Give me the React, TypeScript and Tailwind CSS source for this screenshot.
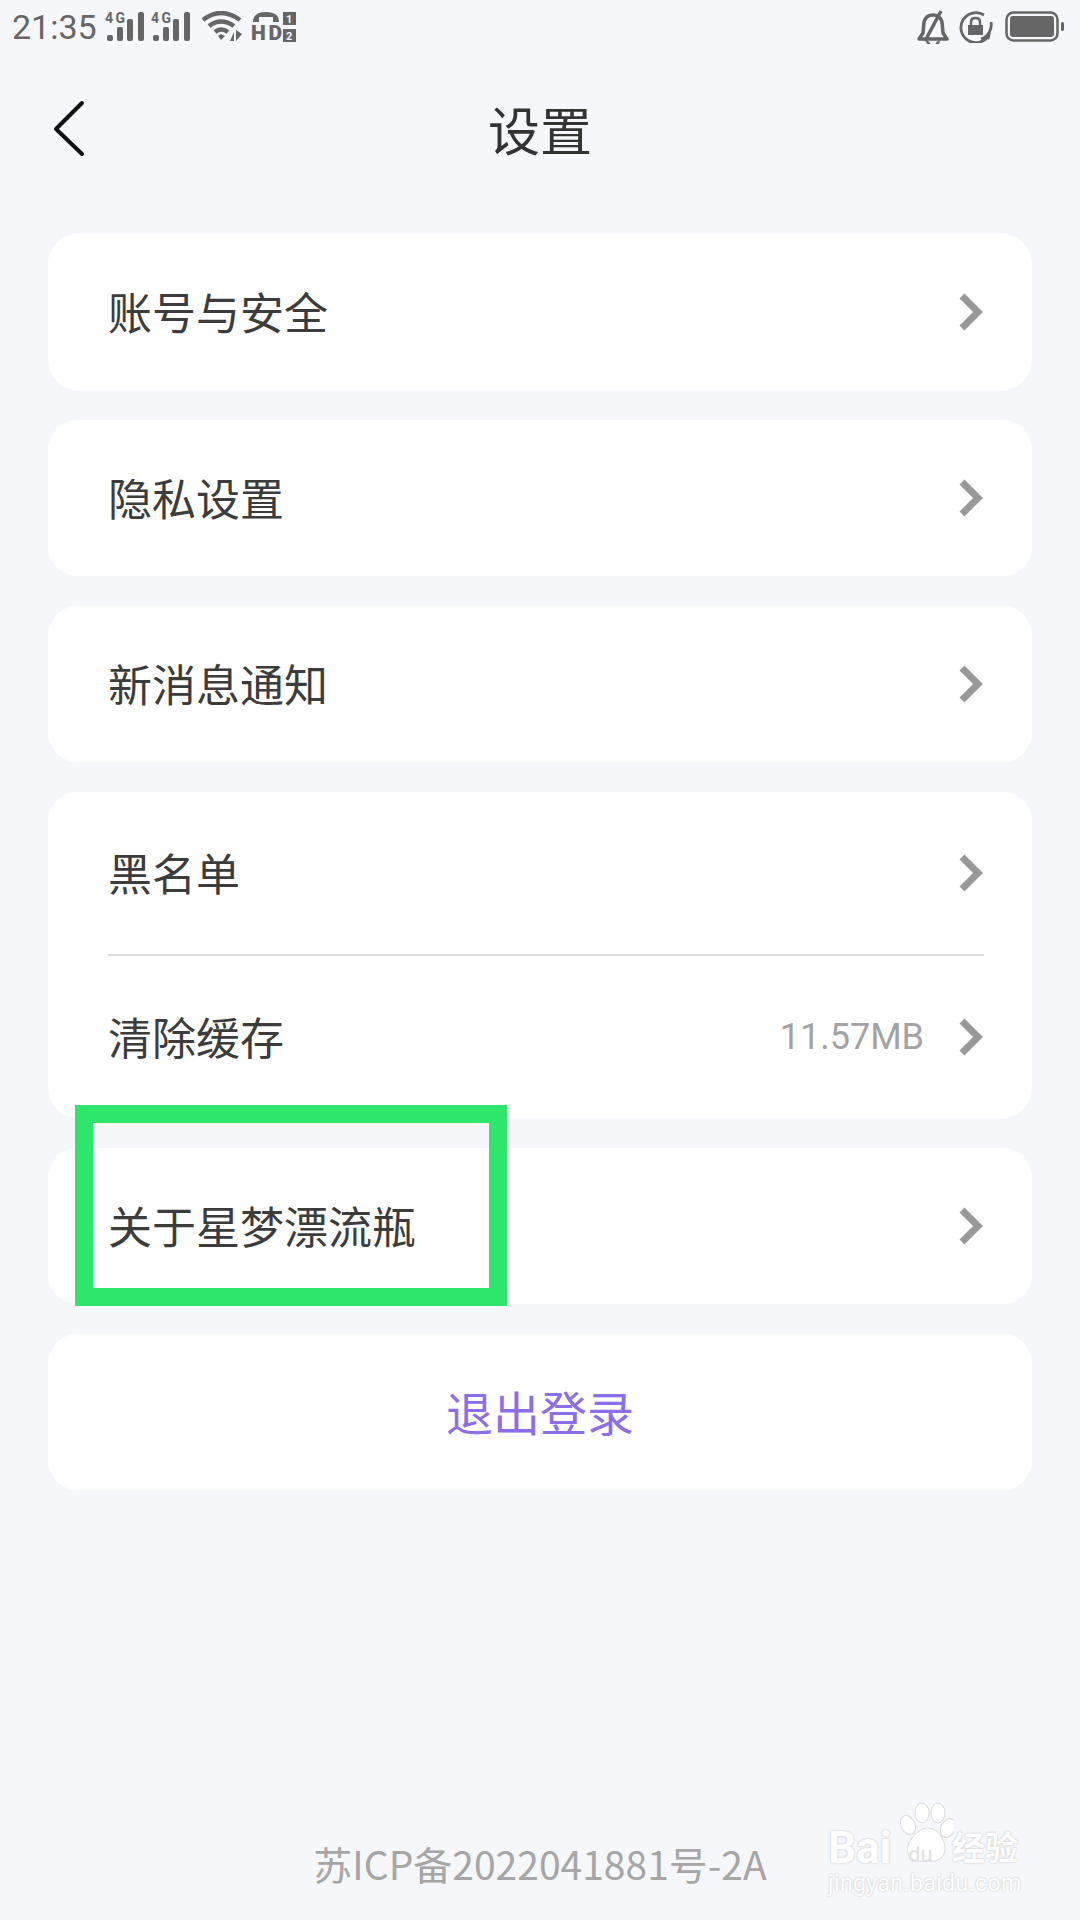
const cjk = { fontFamily: '"Noto Sans CJK SC", "Noto Sans", sans-serif' }

function Chevron() {
  return (
    <svg width="26" height="38" viewBox="0 0 26 38" className="shrink-0">
      <path d="M3 3 L19 19 L3 35" fill="none" stroke="#999999" strokeWidth="7" />
    </svg>
  )
}

function Row({ label, value, className }: { label: string; value?: string; className: string }) {
  return (
    <div className={`flex items-center justify-between pl-[60px] pr-[47px] ${className}`}>
      <span className="text-[44px] leading-none pb-[2px] text-[#3c3c3c]">{label}</span>
      <div className="flex items-center gap-[35px]">
        {value && <span className="text-[36px] leading-none text-[#a3a3a3] font-['Roboto']">{value}</span>}
        <Chevron />
      </div>
    </div>
  )
}

function Card({ children }: { children: React.ReactNode }) {
  return <div className="bg-white rounded-[30px]">{children}</div>
}

function Signal() {
  return (
    <svg width="40" height="36" viewBox="0 -6 40 36" className="shrink-0 mt-[-6px]">
      <text x="0" y="11" fontFamily="Roboto" fontWeight="700" fontSize="14" textLength="20" fill="#666666">4G</text>
      <rect x="2" y="23" width="6" height="6" rx="2" fill="#666666" />
      <rect x="12" y="15" width="6" height="14" rx="2" fill="#666666" />
      <rect x="22" y="7" width="6" height="22" rx="2" fill="#666666" />
      <rect x="33" y="0" width="6" height="29" rx="2" fill="#666666" />
    </svg>
  )
}

function StatusLeft() {
  return (
    <div className="flex items-center">
      <span className="text-[34px] leading-none text-[#666666] font-['Roboto'] ml-[12px] w-[93px]">21:35</span>
      <div className="flex items-center gap-[6px]">
        <Signal />
        <Signal />
      </div>
      <svg width="44" height="32" viewBox="0 0 44 32" className="ml-[10px] shrink-0">
        <path d="M2 9 Q20 -5 39 9" fill="none" stroke="#666666" strokeWidth="4.5" />
        <path d="M8 15 Q20 6 33 15" fill="none" stroke="#666666" strokeWidth="4.5" />
        <path d="M14 21 Q20 16 27 21" fill="none" stroke="#666666" strokeWidth="4.5" />
        <path d="M17 25 L20 23 L24 25 L20 29 Z" fill="#666666" />
        <path d="M29 30 L33 21 L33 30 Z M35 19 L35 30 L41 23 Z" fill="#666666" />
      </svg>
      <svg width="46" height="36" viewBox="0 0 46 36" className="ml-[6px] shrink-0">
        <path d="M2 13 Q2 3 15 3 Q28 3 28 13 L22 13 L22 8 L8 8 L8 13 Z" fill="#666666" />
        <text x="0" y="31" fontFamily="Roboto" fontWeight="900" fontSize="21" fill="#666666" textLength="31">HD</text>
        <rect x="32" y="3" width="13" height="13" fill="#666666" />
        <text x="35" y="14" fontFamily="Roboto" fontWeight="700" fontSize="11" fill="#f6f7fb">1</text>
        <rect x="32" y="20" width="13" height="13" fill="#666666" />
        <text x="35" y="31" fontFamily="Roboto" fontWeight="700" fontSize="11" fill="#f6f7fb">2</text>
      </svg>
    </div>
  )
}

function StatusRight() {
  return (
    <div className="flex items-center mr-[15px]">
      <svg width="32" height="34" viewBox="0 0 32 34" className="shrink-0">
        <path d="M2 29 L6 23 L7 12 Q9 5 16 5 Q23 5 25 12 L26 23 L30 29 Z" fill="none" stroke="#666666" strokeWidth="3.5" strokeLinejoin="round" />
        <path d="M8 31 L24 1" stroke="#666666" strokeWidth="3.5" />
        <path d="M10 31 Q11 34 13 33 M19 33 Q21 34 22 31" stroke="#666666" strokeWidth="2.5" fill="none" />
      </svg>
      <svg width="34" height="32" viewBox="0 0 34 32" className="ml-[10px] shrink-0">
        <path d="M25 4 A15 15 0 1 0 30 24" fill="none" stroke="#666666" strokeWidth="2.8" />
        <path d="M22 28 A15 15 0 0 0 32 11" fill="none" stroke="#666666" strokeWidth="2.8" />
        <path d="M26 24 L32 22 L30 29 Z" fill="#666666" />
        <rect x="9" y="14" width="15" height="10" fill="#666666" />
        <path d="M12 14 V11 Q12 7 16.500 7 Q21 7 21 11 V14" fill="none" stroke="#666666" strokeWidth="2.500" />
      </svg>
      <svg width="60" height="32" viewBox="0 0 60 32" className="ml-[12px] shrink-0">
        <rect x="1.500" y="1.500" width="51" height="28" rx="7" fill="none" stroke="#666666" strokeWidth="2.500" />
        <rect x="5" y="5" width="44" height="21" rx="3" fill="#666666" />
        <rect x="56" y="11" width="3" height="9" rx="1.500" fill="#666666" />
      </svg>
    </div>
  )
}

function Watermark() {
  const glow = '[text-shadow:0_0_2px_#b5b5b5]'
  return (
    <div className="absolute left-[828px] top-[1802px] w-[216px] h-[100px] text-white">
      <svg width="60" height="64" viewBox="0 0 60 64" className="absolute left-[66px] top-0">
        <g fill="#ffffff" stroke="#d9d9d9" strokeWidth="1">
          <ellipse cx="14" cy="23" rx="7" ry="10" transform="rotate(-25 14 23)" />
          <ellipse cx="28" cy="11" rx="7" ry="10" />
          <ellipse cx="44" cy="11" rx="7" ry="10" />
          <ellipse cx="54" cy="26" rx="7" ry="10" transform="rotate(25 54 26)" />
          <path d="M34 26 C46 26 54 44 50 52 C46 60 38 60 34 58 C28 60 18 60 14 52 C10 44 22 26 34 26 Z" />
        </g>
      </svg>
      <span className={`absolute left-0 top-[24px] text-[44px] leading-none font-bold font-['Roboto'] ${glow}`}>Bai</span>
      <span className="absolute left-[80px] top-[42px] text-[22px] leading-none text-[#e0e0e0] font-['Roboto']">du</span>
      <span className={`absolute left-[124px] top-[28px] text-[33px] leading-none font-bold ${glow}`} style={cjk}>经验</span>
      <span className={`absolute left-0 top-[70px] text-[23px] tracking-[0.4px] leading-none font-['Roboto'] ${glow}`}>jingyan.baidu.com</span>
    </div>
  )
}

export default function App() {
  return (
    <div className="relative w-[1080px] h-[1920px] overflow-hidden bg-[#f6f7fb] flex flex-col" style={cjk}>
      <div className="h-[54px] flex items-center justify-between">
        <StatusLeft />
        <StatusRight />
      </div>

      <div className="relative h-[180px] flex items-center justify-center pb-[30px]">
        <svg width="36" height="60" viewBox="0 0 36 60" className="absolute left-[51px] top-[44px]">
          <path d="M31 5 L5 31 L31 56" fill="none" stroke="#111111" strokeWidth="4" strokeLinecap="round" strokeLinejoin="round" />
        </svg>
        <h1 className="text-[52px] leading-none font-normal text-[#333333]">设置</h1>
      </div>

      <div className="flex flex-col gap-[30px] px-[48px]">
        <Card><Row label="账号与安全" className="h-[156px]" /></Card>
        <Card><Row label="隐私设置" className="h-[156px]" /></Card>
        <Card><Row label="新消息通知" className="h-[156px]" /></Card>
        <Card>
          <Row label="黑名单" className="h-[162px]" />
          <div className="h-[2px] mx-[60px] mr-[48px] bg-[#dcdcdc]" />
          <Row label="清除缓存" value="11.57MB" className="h-[162px]" />
        </Card>
        <Card><Row label="关于星梦漂流瓶" className="h-[156px]" /></Card>
        <Card>
          <div className="h-[156px] pb-[4px] flex items-center justify-center text-[47px] leading-none text-[#8b6fe8]">退出登录</div>
        </Card>
      </div>

      <div className="mt-auto pb-[33px] flex justify-center">
        <span className="text-[39px] leading-[1.2] text-[#a6a6a6]">苏ICP备2022041881号-2A</span>
      </div>

      <div className="absolute left-[75px] top-[1105px] w-[432px] h-[201px] border-[18px] border-[#2ee66b]" />
      <Watermark />
    </div>
  )
}
